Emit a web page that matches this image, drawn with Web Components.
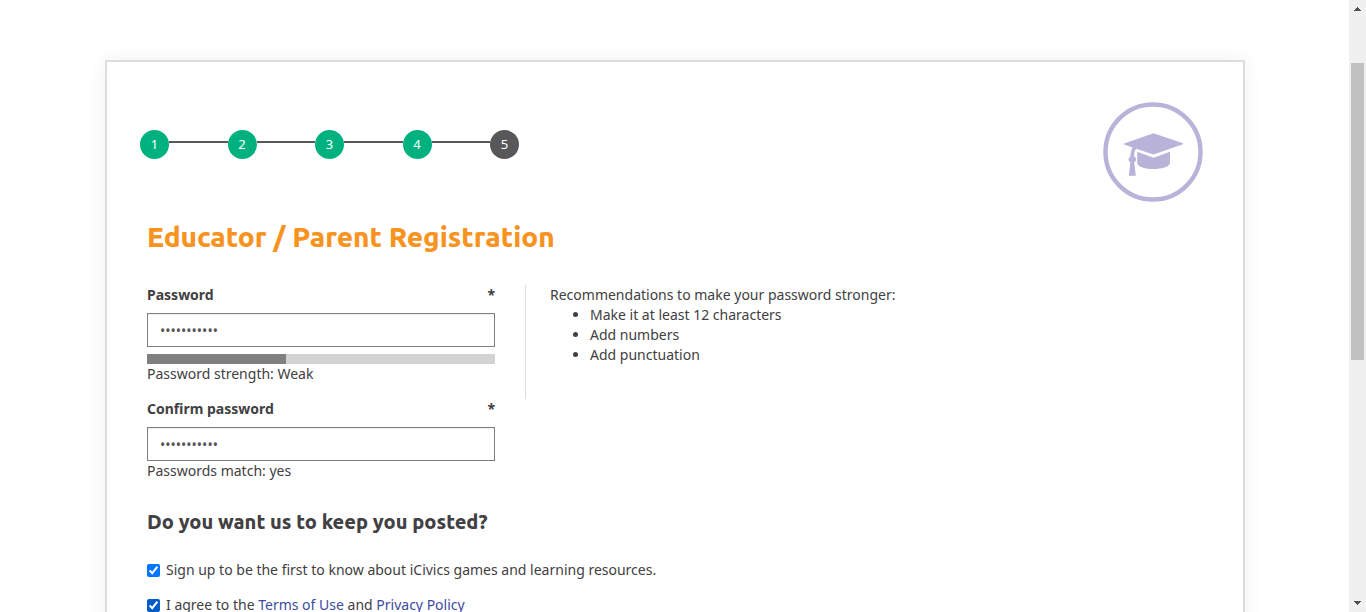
<!DOCTYPE html>
<html lang="en">
<head>
<meta charset="utf-8">
<title>Educator / Parent Registration</title>
<style>
  html, body { margin: 0; background: #fff; }
  body {
    font: 14px/20px "Noto Sans", "Open Sans", sans-serif;
    color: #414042;
    --heading: Ubuntu, "Noto Sans", sans-serif;
    --green: #00b180;
    --slate: #58585a;
    --orange: #f7931e;
    --lilac: #b9b3da;
    --rule: #ddd;
  }
</style>
</head>
<body>
<page-frame>
  <registration-card>
    <step-progress slot="steps" total="5" current="5"></step-progress>
    <role-badge slot="badge"></role-badge>
    <span slot="title">Educator / Parent Registration</span>
    <password-field slot="fields" label="Password" value="icivics2021" strength="40">Password strength: Weak</password-field>
    <password-field slot="fields" label="Confirm password" value="icivics2021">Passwords match: yes</password-field>
    <password-tips slot="tips">Recommendations to make your password stronger:</password-tips>
    <span slot="subtitle">Do you want us to keep you posted?</span>
    <check-option slot="options">Sign up to be the first to know about iCivics games and learning resources.</check-option>
    <check-option slot="options" class="active">I agree to the <text-link href="#terms">Terms of Use</text-link> and <text-link href="#privacy">Privacy Policy</text-link></check-option>
  </registration-card>
</page-frame>

<script>
const define = (name, html, setup) => {
  const template = document.createElement('template');
  template.innerHTML = html;
  customElements.define(name, class extends HTMLElement {
    constructor() {
      super();
      this.attachShadow({ mode: 'open' }).append(template.content.cloneNode(true));
    }
    connectedCallback() {
      if (setup) setup(this, this.shadowRoot);
    }
  });
};

define('page-frame', `
  <style>
    :host { display: flex; height: 100vh; }
    main { flex: 1; min-width: 0; overflow: hidden; padding: 60px 15px 0 16px; }
  </style>
  <main><slot></slot></main>
  <scroll-rail></scroll-rail>`);

define('scroll-rail', `
  <style>
    :host { display: flex; flex-direction: column; align-items: center; justify-content: space-between; width: 17px; background: #f0f0f0; }
    svg { display: block; width: 17px; height: 17px; fill: #505050; }
    .track { flex: 1; display: grid; grid-template-rows: 46fr 297fr 235fr; width: 13px; }
    .thumb { grid-row: 2; background: #c1c1c1; }
  </style>
  <svg viewBox="0 0 17 17" shape-rendering="crispEdges" aria-hidden="true"><path d="M8 7h1v1h1v1h1v1h1v1H5v-1h1V9h1V8h1z"/></svg>
  <div class="track"><div class="thumb"></div></div>
  <svg viewBox="0 0 17 17" shape-rendering="crispEdges" aria-hidden="true"><path d="M5 6h7v1h-1v1h-1v1H9v1H8V9H7V8H6V7H5z"/></svg>`);

define('registration-card', `
  <style>
    :host { display: block; box-sizing: border-box; max-width: 1140px; margin: 0 auto; padding: 40px; border: 2px solid var(--rule); background: #fff; box-shadow: 0 0 20px rgba(0, 0, 0, .06); }
    header { display: flex; justify-content: space-between; align-items: flex-start; }
    ::slotted([slot=steps]) { margin: 28px 0 0 -7px; }
    h1, h2 { margin: 0; font-family: var(--heading); font-weight: 800; }
    h1 { margin-top: 19px; font-size: 28px; line-height: 32px; color: var(--orange); }
    h2 { margin-top: 29px; font-size: 20px; line-height: 24px; }
    .columns { display: flex; align-items: flex-start; gap: 30px; margin-top: 32px; }
    .fields { display: flex; flex-direction: column; gap: 15px; flex: 0 1 348px; }
    .options { display: flex; flex-direction: column; gap: 15px; margin-top: 26px; }
  </style>
  <header><slot name="steps"></slot><slot name="badge"></slot></header>
  <h1><slot name="title"></slot></h1>
  <div class="columns">
    <div class="fields"><slot name="fields"></slot></div>
    <slot name="tips"></slot>
  </div>
  <h2><slot name="subtitle"></slot></h2>
  <div class="options"><slot name="options"></slot></div>`);

define('step-progress', `
  <style>
    :host { display: block; flex: 0 1 379px; }
    ol { display: flex; margin: 0; padding: 0; list-style: none; }
    li { display: flex; flex: 1; }
    li:last-child { flex: none; }
    span { flex: none; width: 29px; height: 29px; border-radius: 50%; background: var(--green); color: #fff; font-size: 13px; line-height: 29px; text-align: center; }
    li[aria-current] span { background: var(--slate); }
    li:not(:last-child)::after { content: ""; flex: 1; height: 2px; margin-top: 11px; background: var(--slate); }
  </style>
  <ol></ol>`, (host, root) => {
    const list = root.querySelector('ol');
    list.replaceChildren();
    for (let n = 1; n <= +host.getAttribute('total'); n++) {
      const item = document.createElement('li');
      const dot = document.createElement('span');
      dot.textContent = n;
      item.append(dot);
      if (n === +host.getAttribute('current')) item.setAttribute('aria-current', 'step');
      list.append(item);
    }
  });

define('role-badge', `
  <style>
    :host { display: block; }
    svg { display: block; width: 100px; height: 100px; fill: var(--lilac); }
  </style>
  <svg viewBox="0 0 100 100" role="img" aria-label="Educator">
    <circle cx="50" cy="50" r="47.5" fill="none" stroke="var(--lilac)" stroke-width="4.4"/>
    <path d="M50.500 31.300 80 41.300v1L50.500 52.500 33 46.800c-1.300 2-1.900 4.600-1.800 7.600 2.500 1.300 2.500 4.600 0 5.900l1.600 13.400h-6.900l1.500-13.400c-2.400-1.400-2.400-4.600 0-5.900 0-3.400 1-6.700 2.200-8.800L21 42.400v-1z"/>
    <path d="M34.200 49.700 50.500 55.800 67 49.700V61c-1 7.800-31.500 8.200-32.800 0z"/>
  </svg>`);

define('password-field', `
  <style>
    :host { display: block; }
    .caption { display: flex; justify-content: space-between; margin-bottom: 8px; font-weight: 700; }
    input { display: block; box-sizing: border-box; width: 100%; height: 34px; padding: 6px 12px; border: 1px solid #808080; border-radius: 0; background: #fff; box-shadow: inset 0 1px 1px rgba(0, 0, 0, .075); color: #555; font: inherit; }
    .meter { height: 10px; margin-top: 7px; background: #d3d3d3; }
    .meter div { height: 100%; background: #808080; }
    .meter[hidden] { display: none; }
  </style>
  <label class="caption" for="field"><span class="name"></span><span>*</span></label>
  <input id="field" type="password" required>
  <div class="meter" hidden><div></div></div>
  <div><slot></slot></div>`, (host, root) => {
    root.querySelector('.name').textContent = host.getAttribute('label');
    root.querySelector('input').value = host.getAttribute('value');
    if (host.hasAttribute('strength')) {
      root.querySelector('.meter').hidden = false;
      root.querySelector('.meter div').style.width = host.getAttribute('strength') + '%';
    }
  });

define('password-tips', `
  <style>
    :host { display: block; box-sizing: border-box; min-height: 114px; padding-left: 24px; border-left: 1px solid var(--rule); }
    ul { margin: 0; padding-left: 40px; }
  </style>
  <div><slot></slot></div>
  <ul><li>Make it at least 12 characters</li><li>Add numbers</li><li>Add punctuation</li></ul>`);

define('check-option', `
  <style>
    :host { display: block; accent-color: #0075ff; }
    :host(.active) { accent-color: #005cc8; }
    .row { display: flex; align-items: flex-start; gap: 6px; }
    input { flex: none; width: 13px; height: 13px; margin: 4px 0 0; }
  </style>
  <div class="row"><input id="box" type="checkbox" checked><label for="box"><slot></slot></label></div>`);

define('text-link', `
  <style>
    :host { display: inline; }
    a { color: #3b4ba0; text-decoration: none; }
  </style>
  <a><slot></slot></a>`, (host, root) => {
    root.querySelector('a').href = host.getAttribute('href');
  });
</script>
</body>
</html>
